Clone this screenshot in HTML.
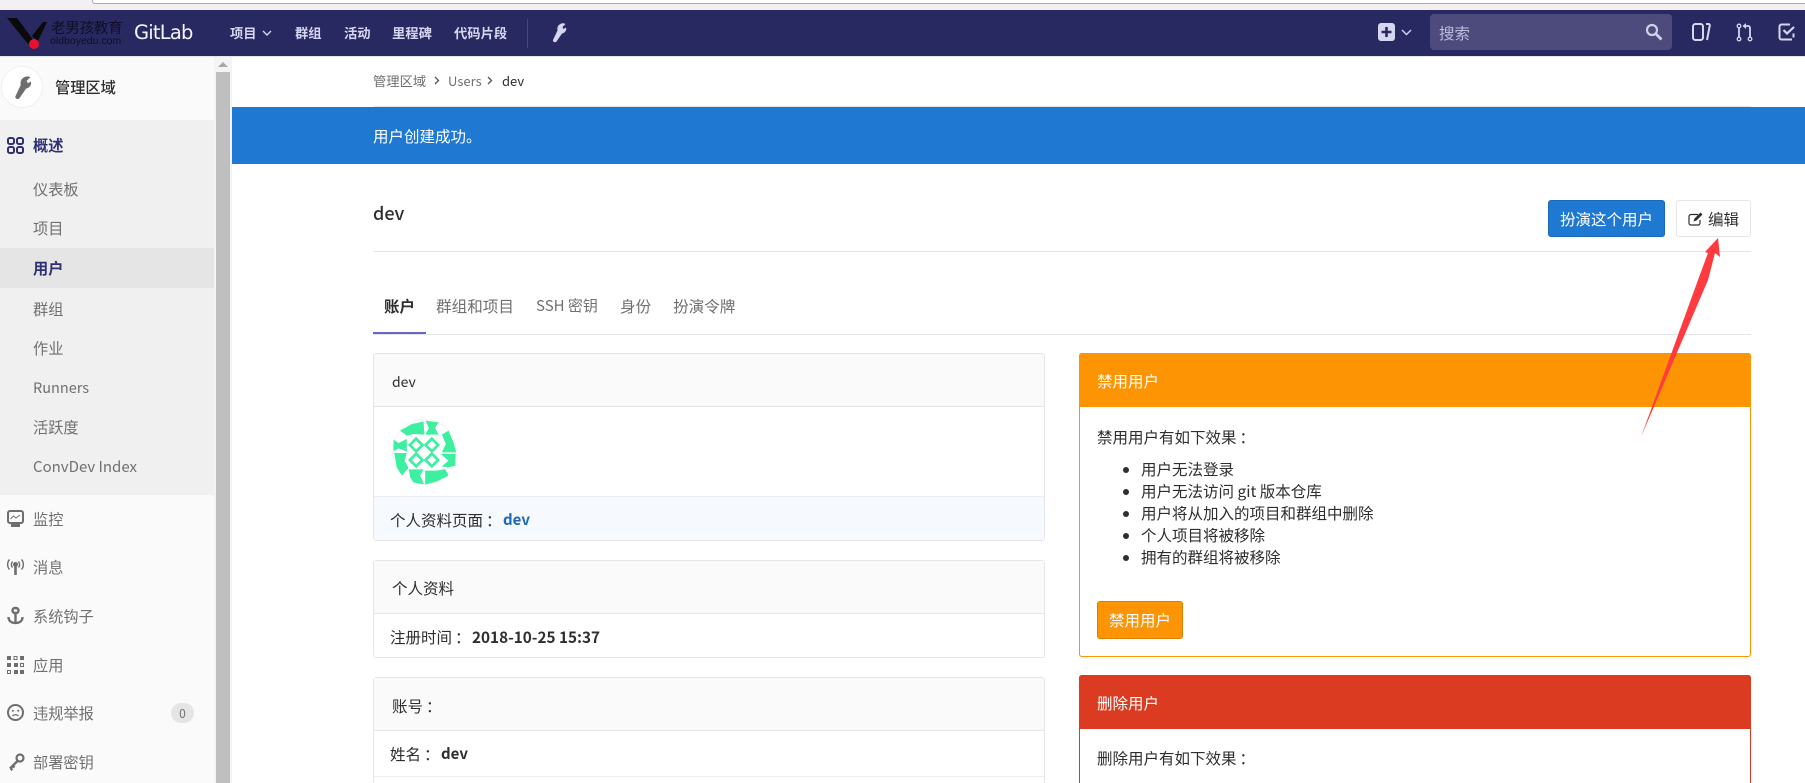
<!DOCTYPE html>
<html lang="zh"><head><meta charset="utf-8"><title>GitLab</title>
<style>
html,body{margin:0;padding:0;width:1805px;height:783px;overflow:hidden;background:#fff}
body{position:relative;font-family:"Noto Sans CJK SC","Liberation Sans",sans-serif;font-size:15.500px;color:#2e2e2e}
.t{position:absolute;white-space:nowrap;line-height:20px;height:20px}
.b{position:absolute;box-sizing:border-box}
svg{position:absolute;overflow:visible}
.n{color:#d6d6f0;font-size:13.300px;font-weight:700}
.s{color:#707070;left:33px;font-size:15.200px}
.c{font-family:"Noto Sans CJK TC",sans-serif;margin-left:3px}
</style></head><body>
<!-- browser strip -->
<div class="b" style="left:0;top:0;width:1805px;height:10px;background:#f2f0f0"></div>
<div class="b" style="left:92px;top:0;width:1713px;height:4px;background:#fff;border-left:1px solid #aaa;border-bottom:1px solid #aaa;border-bottom-left-radius:3px"></div>
<!-- nav -->
<div class="b" style="left:0;top:10px;width:1805px;height:46px;background:#292961"></div>
<div class="b" style="left:0;top:56px;width:1805px;height:1px;background:#e5e5e5"></div>
<svg style="left:0;top:0" width="60" height="60"><polygon points="7,18 17,18 34,41 28,44" fill="#0a0a0a"/><polygon points="47,22 38,41 32,36 43,22" fill="#0a0a0a"/><circle cx="34" cy="44" r="5" fill="#e8112d"/></svg>
<div class="t" style="left:51px;top:18px;color:#0e0e24;font-size:14.500px;letter-spacing:-.2px">老男孩教育</div>
<div class="t" style="left:50px;top:31px;color:#0e0e24;font-size:10.500px;letter-spacing:0;font-family:'Liberation Sans',sans-serif">oldboyedu.com</div>
<div class="t" style="left:134px;top:23px;color:#f4f4fb;font-size:19.500px;font-family:'DejaVu Sans',sans-serif;letter-spacing:-.8px">GitLab</div>
<div class="t n" style="left:230px;top:23px">项目</div>
<svg style="left:262px;top:30px" width="10" height="7"><path d="M1 1l4 4 4-4" fill="none" stroke="#d6d6f0" stroke-width="1.400"/></svg>
<div class="t n" style="left:295px;top:23px">群组</div>
<div class="t n" style="left:344px;top:23px">活动</div>
<div class="t n" style="left:392px;top:23px">里程碑</div>
<div class="t n" style="left:454px;top:23px">代码片段</div>
<div class="b" style="left:527px;top:19px;width:1px;height:29px;background:#48487f"></div>
<svg style="left:551px;top:23px" width="16" height="20" viewBox="0 0 16 20"><path d="M10.500 .5C12 0 13.500 .3 14.500 1L11.500 4 12.500 6 15 4.500C16 7 14 10 11 10.500L5.500 18.500C4.500 20 1.500 19 2 17L6.500 7.500C5.800 4 7.500 1.300 10.500 .5Z" fill="#d6d6f0"/></svg>
<svg style="left:1378px;top:23px" width="18" height="18"><rect width="17" height="18" rx="3" fill="#d6d6f0"/><path d="M8.500 4v10M3.500 9h10" stroke="#292961" stroke-width="2.600"/></svg>
<svg style="left:1401px;top:29px" width="11" height="7"><path d="M1 1l4.500 4.500L10 1" fill="none" stroke="#d6d6f0" stroke-width="1.400"/></svg>
<div class="b" style="left:1430px;top:14px;width:242px;height:36px;background:#4c4b7b;border-radius:4px"></div>
<div class="t" style="left:1439px;top:23px;color:#bcbce0;font-size:15.500px">搜索</div>
<svg style="left:1645px;top:23px" width="18" height="18"><circle cx="7" cy="7" r="5" fill="none" stroke="#d0d0e6" stroke-width="2.200"/><path d="M11 11l5.500 5.500" stroke="#d0d0e6" stroke-width="2.800"/></svg>
<svg style="left:1692px;top:23px" width="19" height="19"><rect x="1" y="1" width="10" height="16" rx="2.500" fill="none" stroke="#d6d6f0" stroke-width="2"/><path d="M14 1h2.500c1 0 1.500.7 1.300 1.500L15 17" fill="none" stroke="#d6d6f0" stroke-width="2"/></svg>
<svg style="left:1736px;top:23px" width="17" height="19"><circle cx="3" cy="3" r="1.800" fill="none" stroke="#d6d6f0" stroke-width="1.300"/><circle cx="3" cy="16" r="1.800" fill="none" stroke="#d6d6f0" stroke-width="1.300"/><circle cx="14" cy="16" r="1.800" fill="none" stroke="#d6d6f0" stroke-width="1.300"/><path d="M3 5v9M14 14V5c0-1.500-1-2-2-2H8" fill="none" stroke="#d6d6f0" stroke-width="1.800"/><path d="M10 0L6.500 3 10 6z" fill="#d6d6f0"/></svg>
<svg style="left:1778px;top:23px" width="18" height="18"><path d="M14 16.500H3.500a2 2 0 0 1-2-2v-11a2 2 0 0 1 2-2H12M15.500 10.500v4" fill="none" stroke="#d6d6f0" stroke-width="2"/><path d="M5.500 7l3.500 3.500L16 4" fill="none" stroke="#d6d6f0" stroke-width="2.200"/></svg>
<!-- sidebar -->
<div class="b" style="left:0;top:57px;width:214px;height:726px;background:#fafafa"></div>
<div class="b" style="left:0;top:120px;width:214px;height:375px;background:#f0f0f0"></div>
<div class="b" style="left:0;top:248px;width:214px;height:40px;background:#e5e5e5"></div>
<div class="b" style="left:214px;top:57px;width:18px;height:726px;background:#f4f4f4"></div>
<div class="b" style="left:216px;top:72px;width:14px;height:711px;background:#bfbfbf"></div>
<svg style="left:218px;top:62px" width="10" height="6"><path d="M5 0l5 5H0z" fill="#a8a8a8"/></svg>
<div class="b" style="left:1px;top:66px;width:42px;height:42px;border-radius:50%;background:#fff;border:1px solid #f0f0f0"></div>
<svg style="left:13px;top:76px" width="19" height="24" viewBox="0 0 16 20"><path d="M10.500 .5C12 0 13.500 .3 14.500 1L11.500 4 12.500 6 15 4.500C16 7 14 10 11 10.500L5.500 18.500C4.500 20 1.500 19 2 17L6.500 7.500C5.800 4 7.500 1.300 10.500 .5Z" fill="#6e6e6e"/></svg>
<div class="t" style="left:55px;top:77px;font-size:15.200px;font-weight:500;color:#2e2e2e">管理区域</div>
<svg style="left:7px;top:137px" width="18" height="18" fill="none" stroke="#2f2f74" stroke-width="2"><rect x="1" y="1" width="6" height="6" rx="1.800"/><rect x="10" y="1" width="6" height="6" rx="1.800"/><rect x="1" y="10" width="6" height="6" rx="1.800"/><rect x="10" y="10" width="6" height="6" rx="1.800"/></svg>
<div class="t" style="left:33px;top:135px;font-weight:700;color:#2f2f74;font-size:15.200px">概述</div>
<div class="t s" style="top:179px">仪表板</div>
<div class="t s" style="top:218px">项目</div>
<div class="t" style="left:33px;top:258px;font-weight:700;color:#2f2f74;font-size:15.200px">用户</div>
<div class="t s" style="top:299px">群组</div>
<div class="t s" style="top:338px">作业</div>
<div class="t s" style="top:378px;font-size:14.500px">Runners</div>
<div class="t s" style="top:417px">活跃度</div>
<div class="t s" style="top:457px;font-size:15px">ConvDev Index</div>
<div class="t s" style="top:509px">监控</div>
<div class="t s" style="top:557px">消息</div>
<div class="t s" style="top:606px">系统钩子</div>
<div class="t s" style="top:655px">应用</div>
<div class="t s" style="top:703px">违规举报</div>
<div class="t s" style="top:752px">部署密钥</div>
<svg style="left:7px;top:510px" width="18" height="18"><rect x="1" y="1" width="15" height="12" rx="2" fill="none" stroke="#6e6e6e" stroke-width="2"/><path d="M3.500 9l3-3 2.500 2 4-3" fill="none" stroke="#6e6e6e" stroke-width="1"/><rect x="4" y="14" width="9" height="3" fill="#6e6e6e"/></svg>
<svg style="left:7px;top:559px" width="18" height="18" fill="none" stroke="#6e6e6e" stroke-width="1.400"><circle cx="8.500" cy="5.500" r="1.800" fill="#6e6e6e"/><path d="M8.500 7v9" stroke-width="2.600"/><path d="M5.500 2.500c-1.500 2-1.500 4.500 0 6M11.500 2.500c1.500 2 1.500 4.500 0 6M2.500 0.500c-2.500 3-2.500 7 0 10M14.500 0.500c2.500 3 2.500 7 0 10"/></svg>
<svg style="left:7px;top:607px" width="18" height="18" fill="none" stroke="#6e6e6e" stroke-width="2.400"><rect x="5.500" y="1" width="6" height="5" rx="2.500"/><path d="M8.500 6v10M1.500 10c0 4 3 6 7 6 4 0 7-2 7-6"/></svg>
<svg style="left:7px;top:656px" width="18" height="18" fill="#6e6e6e"><rect x="0" y="0" width="4" height="4"/><rect x="7" y=".5" width="3" height="3" fill="none" stroke="#6e6e6e"/><rect x="13" y="0" width="4" height="4"/><rect x="0" y="7" width="4" height="4"/><rect x="7" y="7" width="4" height="4"/><rect x="13.500" y="7.500" width="3" height="3" fill="none" stroke="#6e6e6e"/><rect x=".5" y="14.500" width="3" height="3" fill="none" stroke="#6e6e6e"/><rect x="7" y="14" width="4" height="4"/><rect x="13" y="14" width="4" height="4"/></svg>
<svg style="left:7px;top:704px" width="18" height="18" fill="none" stroke="#6e6e6e"><circle cx="8.500" cy="8.500" r="7.500" stroke-width="2"/><circle cx="5.800" cy="6.800" r="1" fill="#6e6e6e" stroke="none"/><circle cx="11.200" cy="6.800" r="1" fill="#6e6e6e" stroke="none"/><path d="M5.500 12c1.500-1.700 4.500-1.700 6 0" stroke-width="1.300"/></svg>
<svg style="left:8px;top:753px" width="18" height="18" fill="none" stroke="#6e6e6e"><circle cx="12" cy="5" r="3.500" stroke-width="2.200"/><path d="M9.500 8L2 15.500M2.500 15.500l2 1.500M5 13l1.500 1.500" stroke-width="2.400"/></svg>
<div class="b" style="left:171px;top:703px;width:23px;height:20px;border-radius:10px;background:#e5e5e5"></div>
<div class="t" style="left:171px;top:704px;width:23px;text-align:center;color:#707070;font-size:12px">0</div>
<!-- main header -->
<div class="t" style="left:373px;top:71px;font-size:13.300px;color:#707070">管理区域</div>
<svg style="left:434px;top:76px" width="6" height="9"><path d="M1 1l3.500 3.500L1 8" fill="none" stroke="#555" stroke-width="1.300"/></svg>
<div class="t" style="left:448px;top:71px;font-size:13px;color:#707070">Users</div>
<svg style="left:487px;top:76px" width="6" height="9"><path d="M1 1l3.500 3.500L1 8" fill="none" stroke="#555" stroke-width="1.300"/></svg>
<div class="t" style="left:502px;top:71px;font-size:13px;color:#2e2e2e">dev</div>
<div class="b" style="left:373px;top:106px;width:1378px;height:1px;background:#e5e5e5"></div>
<div class="b" style="left:232px;top:107px;width:1573px;height:57px;background:#1f78d1"></div>
<div class="t" style="left:373px;top:126px;color:#fff;font-size:15.500px">用户创建成功。</div>
<div class="t" style="left:373px;top:203px;font-size:18px;font-weight:500;color:#2e2e2e">dev</div>
<div class="b" style="left:1548px;top:200px;width:117px;height:37px;background:#1f78d1;border:1px solid #1b69b6;border-radius:3px"></div>
<div class="t" style="left:1548px;top:209px;width:117px;text-align:center;color:#fff;font-size:15.500px">扮演这个用户</div>
<div class="b" style="left:1676px;top:200px;width:75px;height:37px;background:#fff;border:1px solid #e5e5e5;border-radius:3px"></div>
<svg style="left:1688px;top:212px" width="16" height="14"><path d="M10 2.500H3a2 2 0 0 0-2 2V11a2 2 0 0 0 2 2h7a2 2 0 0 0 2-2V8" fill="none" stroke="#2e2e2e" stroke-width="1.200"/><path d="M5.500 9.500l1-3 6-6 2 2-6 6z" fill="#2e2e2e"/></svg>
<div class="t" style="left:1708px;top:209px;font-size:15.500px;color:#2e2e2e">编辑</div>
<div class="b" style="left:373px;top:251px;width:1378px;height:1px;background:#e5e5e5"></div>
<!-- tabs -->
<div class="t" style="left:384px;top:296px;font-weight:700;color:#2e2e2e;font-size:15.500px">账户</div>
<div class="t" style="left:436px;top:296px;color:#707070;font-size:15.600px">群组和项目</div>
<div class="t" style="left:536px;top:296px;color:#707070;font-size:15px">SSH 密钥</div>
<div class="t" style="left:620px;top:296px;color:#707070;font-size:15.600px">身份</div>
<div class="t" style="left:673px;top:296px;color:#707070;font-size:15.600px">扮演令牌</div>
<div class="b" style="left:373px;top:334px;width:1378px;height:1px;background:#e5e5e5"></div>
<div class="b" style="left:373px;top:332px;width:53px;height:2px;background:#6666c4"></div>
<!-- left cards -->
<div class="b" style="left:373px;top:353px;width:672px;height:188px;border:1px solid #e5e5e5;border-radius:3px;background:#fff"></div>
<div class="b" style="left:374px;top:354px;width:670px;height:53px;background:#fafafa;border-bottom:1px solid #e5e5e5;border-radius:3px 3px 0 0"></div>
<div class="t" style="left:392px;top:372px;font-size:14px;color:#2e2e2e">dev</div>
<svg style="left:392px;top:419px" width="65" height="65" viewBox="38 25 190 195"><ellipse cx="133" cy="123" rx="95" ry="97" fill="#fff" stroke="#eee" stroke-width="2"/><g fill="#3df0a0"><polygon points="60,60 95,40 130,33 133,72 100,70 80,75"/><polygon points="136,30 175,35 165,52 175,72 136,72 146,52"/><polygon points="185,72 205,60 220,95 228,125 185,125 197,100"/><polygon points="40,87 55,97 80,85 80,123 55,113 40,122"/><polygon points="42,127 80,127 73,150 85,172 65,195 50,170"/><polygon points="182,130 226,130 226,165 205,170 185,167 205,150"/><polygon points="86,176 130,176 120,195 132,221 100,215 90,200"/><polygon points="135,180 170,180 195,175 205,195 170,212 135,222"/><g fill="none" stroke="#3df0a0" stroke-width="8"><polygon points="108,84 127,103 108,122 89,103"/><polygon points="155,84 174,103 155,122 136,103"/><polygon points="108,129 127,148 108,167 89,148"/><polygon points="155,129 174,148 155,167 136,148"/></g></g></svg>
<div class="b" style="left:374px;top:496px;width:670px;height:44px;background:#f6f9fd;border-top:1px solid #eee"></div>
<div class="t" style="left:390px;top:510px;font-size:15.500px;color:#2e2e2e">个人资料页面<span class="c">：</span></div>
<div class="t" style="left:503px;top:510px;font-size:15px;font-weight:700;color:#1b69b6">dev</div>
<div class="b" style="left:373px;top:560px;width:672px;height:98px;border:1px solid #e5e5e5;border-radius:3px;background:#fff"></div>
<div class="b" style="left:374px;top:561px;width:670px;height:53px;background:#fafafa;border-bottom:1px solid #e5e5e5"></div>
<div class="t" style="left:392px;top:578px;font-size:15.500px;color:#2e2e2e">个人资料</div>
<div class="t" style="left:390px;top:627px;font-size:15.500px;color:#2e2e2e">注册时间<span class="c">：</span></div>
<div class="t" style="left:472px;top:627px;font-size:15.300px;font-weight:700;color:#2e2e2e">2018-10-25 15:37</div>
<div class="b" style="left:373px;top:677px;width:672px;height:120px;border:1px solid #e5e5e5;border-radius:3px;background:#fff"></div>
<div class="b" style="left:374px;top:678px;width:670px;height:53px;background:#fafafa;border-bottom:1px solid #e5e5e5"></div>
<div class="t" style="left:392px;top:696px;font-size:15.500px;color:#2e2e2e">账号<span class="c">：</span></div>
<div class="t" style="left:390px;top:744px;font-size:15.500px;color:#2e2e2e">姓名<span class="c">：</span></div>
<div class="t" style="left:441px;top:744px;font-size:15px;font-weight:700;color:#2e2e2e">dev</div>
<div class="b" style="left:374px;top:776px;width:670px;height:1px;background:#eee"></div>
<!-- right cards -->
<div class="b" style="left:1079px;top:353px;width:672px;height:304px;border:1px solid #fc9403;border-radius:3px;background:#fff"></div>
<div class="b" style="left:1079px;top:353px;width:672px;height:54px;background:#fc9403;border-radius:3px 3px 0 0"></div>
<div class="t" style="left:1097px;top:371px;color:#fff;font-size:15.500px">禁用用户</div>
<div class="t" style="left:1097px;top:427px;font-size:15.500px">禁用用户有如下效果<span class="c">：</span></div>
<div class="t" style="left:1141px;top:459px;font-size:15.500px">用户无法登录</div>
<div class="t" style="left:1141px;top:481px;font-size:15.500px">用户无法访问 git 版本仓库</div>
<div class="t" style="left:1141px;top:503px;font-size:15.500px">用户将从加入的项目和群组中删除</div>
<div class="t" style="left:1141px;top:525px;font-size:15.500px">个人项目将被移除</div>
<div class="t" style="left:1141px;top:547px;font-size:15.500px">拥有的群组将被移除</div>
<div class="b" style="left:1123px;top:467px;width:6px;height:6px;border-radius:50%;background:#2e2e2e"></div>
<div class="b" style="left:1123px;top:489px;width:6px;height:6px;border-radius:50%;background:#2e2e2e"></div>
<div class="b" style="left:1123px;top:511px;width:6px;height:6px;border-radius:50%;background:#2e2e2e"></div>
<div class="b" style="left:1123px;top:533px;width:6px;height:6px;border-radius:50%;background:#2e2e2e"></div>
<div class="b" style="left:1123px;top:555px;width:6px;height:6px;border-radius:50%;background:#2e2e2e"></div>
<div class="b" style="left:1097px;top:601px;width:86px;height:38px;background:#fc9403;border:1px solid #de7e00;border-radius:3px"></div>
<div class="t" style="left:1097px;top:610px;width:86px;text-align:center;color:#fff;font-size:15.500px">禁用用户</div>
<div class="b" style="left:1079px;top:675px;width:672px;height:130px;border:1px solid #db3b21;border-radius:3px;background:#fff"></div>
<div class="b" style="left:1079px;top:675px;width:672px;height:54px;background:#db3b21;border-radius:3px 3px 0 0"></div>
<div class="t" style="left:1097px;top:693px;color:#fff;font-size:15.500px">删除用户</div>
<div class="t" style="left:1097px;top:748px;font-size:15.500px">删除用户有如下效果<span class="c">：</span></div>
<!-- arrow -->
<svg style="left:0;top:0" width="1805" height="783"><polygon points="1718,238 1720,257 1715,253 1708,280 1641,437 1698,280 1708,253 1705,252" fill="#ff3b3f"/></svg>
</body></html>
